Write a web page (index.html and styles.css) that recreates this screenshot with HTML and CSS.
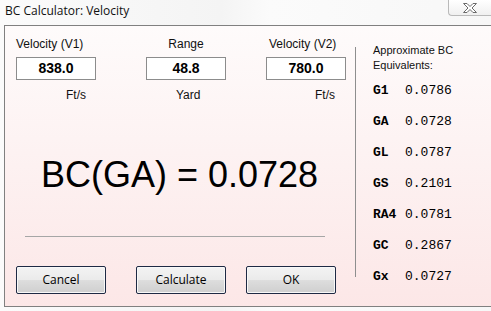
FILE: index.html
```html
<!DOCTYPE html>
<html>
<head>
<meta charset="utf-8">
<link rel="stylesheet" href="styles.css">
</head>
<body>
<div class="window">
  <div class="titlebar">
    <span class="title">BC Calculator: Velocity</span>
    <div class="close">
      <svg width="16" height="12" viewBox="0 0 16 12">
        <path d="M1.5 1.5 H5 L8 4.5 L11 1.5 H14.5 L10 6 L14.5 10.5 H11 L8 7.5 L5 10.5 H1.5 L6 6 Z" fill="#fff" stroke="#6b6b6b" stroke-width="1" stroke-linejoin="round"/>
      </svg>
    </div>
  </div>
  <div class="panel">
    <div class="main">
      <div class="fields">
        <div class="field f1">
          <div class="flabel l1">Velocity (V1)</div>
          <div class="box">838.0</div>
          <div class="unit u1">Ft/s</div>
        </div>
        <div class="field f2">
          <div class="flabel">Range</div>
          <div class="box">48.8</div>
          <div class="unit u2">Yard</div>
        </div>
        <div class="field f3">
          <div class="flabel l3">Velocity (V2)</div>
          <div class="box">780.0</div>
          <div class="unit u3">Ft/s</div>
        </div>
      </div>
      <div class="result">BC(GA) = 0.0728</div>
      <div class="rule"></div>
      <div class="buttons">
        <div class="btn">Cancel</div>
        <div class="btn b2">Calculate</div>
        <div class="btn b3">OK</div>
      </div>
    </div>
    <div class="divider"></div>
    <div class="side">
      <div class="heading">Approximate BC<br>Equivalents:</div>
      <div class="rows">
        <div class="row"><b>G1</b><span>0.0786</span></div>
        <div class="row"><b>GA</b><span>0.0728</span></div>
        <div class="row"><b>GL</b><span>0.0787</span></div>
        <div class="row"><b>GS</b><span>0.2101</span></div>
        <div class="row"><b>RA4</b><span>0.0781</span></div>
        <div class="row"><b>GC</b><span>0.2867</span></div>
        <div class="row"><b>Gx</b><span>0.0727</span></div>
      </div>
    </div>
  </div>
</div>
</body>
</html>
```
FILE: styles.css
```css
* { box-sizing: border-box; }
html, body { margin: 0; padding: 0; }
body {
  width: 491px;
  height: 311px;
  overflow: hidden;
  background: #eeeeee;
  font-family: "Liberation Sans", Arial, sans-serif;
  color: #000;
}
.window {
  width: 491px;
  height: 311px;
  background: linear-gradient(90deg, #fbfbfb 0%, #f4f4f4 45%, #fbfbfb 55%, #f7f7f7 100%);
}
.titlebar {
  height: 25px;
  display: flex;
  align-items: flex-start;
  justify-content: space-between;
}
.title {
  font-family: "Open Sans", "Noto Sans", sans-serif;
  font-size: 12px;
  line-height: 16px;
  margin: 3px 0 0 5px;
  color: #111;
}
.close {
  width: 43px;
  height: 16px;
  border: 1px solid #b9b9b9;
  border-top: none;
  border-right: none;
  border-bottom-left-radius: 4px;
  background: linear-gradient(#ffffff, #f0f0f0);
  display: flex;
  justify-content: center;
  align-items: center;
}
.panel {
  margin-left: 4px;
  height: 282px;
  border: 1px solid #808080;
  border-right: none;
  background: linear-gradient(#fefbfb 0%, #fdf2f2 45%, #fce7e7 100%);
  display: flex;
}
.main {
  width: 350px;
  flex: none;
}
.fields {
  display: flex;
  padding: 11px 0 0 11px;
}
.field { width: 80px; display: flex; flex-direction: column; }
.f2 { margin-left: 50px; }
.f3 { margin-left: 40px; }
.flabel {
  font-size: 12px;
  line-height: 14px;
  text-align: center;
  color: #111;
  white-space: nowrap;
}
.l1 { text-align: left; }
.l3 { text-align: left; padding-left: 3px; }
.box {
  margin-top: 6px;
  height: 23px;
  border: 1px solid #8c8c8c;
  background: #fff;
  font-weight: bold;
  font-size: 14px;
  line-height: 21px;
  text-align: center;
}
.unit {
  font-size: 12px;
  line-height: 14px;
  margin-top: 8px;
  color: #111;
}
.u1 { padding-left: 50px; }
.u2 { padding-left: 30px; }
.u3 { padding-left: 49px; }
.result {
  margin-top: 52px;
  font-size: 36px;
  line-height: 42px;
  text-align: center;
  padding-right: 1px;
}
.rule {
  margin: 40px 0 0 20px;
  width: 300px;
  height: 1px;
  background: #a6a6a6;
}
.buttons {
  display: flex;
  padding: 29px 0 0 11px;
}
.btn {
  width: 90px;
  height: 28px;
  border: 1px solid #1e2a44;
  border-radius: 2px;
  box-shadow: inset 0 0 0 1px #f8f8f8;
  background: linear-gradient(#f3f3f3 0%, #ebebeb 48%, #dddddd 52%, #cfcfcf 100%);
  font-family: "Open Sans", "Noto Sans", sans-serif;
  font-size: 12px;
  line-height: 26px;
  text-align: center;
}
.b2 { margin-left: 30px; }
.b3 { margin-left: 20px; }
.divider {
  margin-top: 21px;
  width: 1px;
  height: 230px;
  background: #8e8e8e;
  flex: none;
}
.side {
  padding: 17px 0 0 17px;
}
.heading {
  font-size: 11px;
  line-height: 15px;
  color: #111;
}
.rows {
  margin-top: 10px;
}
.row {
  font-family: "Liberation Mono", "Courier New", monospace;
  font-size: 13px;
  height: 31px;
  line-height: 16px;
  display: flex;
}
.row b { width: 32px; font-weight: bold; }
.row span { font-weight: normal; }
```
